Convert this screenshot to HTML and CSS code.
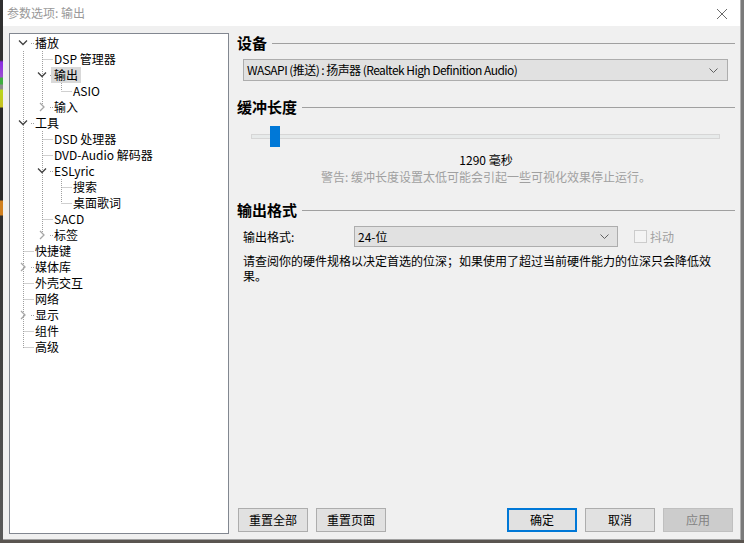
FILE: index.html
```html
<!DOCTYPE html>
<html lang="zh-CN">
<head>
<meta charset="utf-8">
<title>参数选项: 输出</title>
<link rel="stylesheet" href="styles.css">
</head>
<body>
<div class="screen">
  <div class="strip-left"></div>
  <div class="window">
    <div class="titlebar">
      <span class="title">参数选项: 输出</span>
      <svg class="close" width="12" height="12" viewBox="0 0 12 12"><path d="M1 1L11 11M11 1L1 11" stroke="#6b6b6b" stroke-width="1" fill="none"/></svg>
    </div>
    <div class="body">
      <div class="tree">
        <svg class="tree-lines" width="218" height="330" viewBox="0 0 218 330">
          <g stroke="#a0a0a0" stroke-width="1" stroke-dasharray="1 1" fill="none">
            <path d="M13.5 17V314"/>
            <path d="M21 9.5H24M21 89.5H24M21 233.5H24M21 281.5H24"/>
            <path d="M13.5 217.5H24M13.5 249.5H24M13.5 265.5H24M13.5 297.5H24M13.5 313.5H24"/>
            <path d="M32.5 17V73"/>
            <path d="M32.5 25.5H43M40 41.5H43M40 73.5H43"/>
            <path d="M32.5 97V201"/>
            <path d="M32.5 105.5H43M32.5 121.5H43M32.5 185.5H43M40 137.5H43M40 201.5H43"/>
            <path d="M51.5 49V57"/>
            <path d="M51.5 57.5H62"/>
            <path d="M51.5 145V169"/>
            <path d="M51.5 153.5H62M51.5 169.5H62"/>
          </g>
        </svg>
        <div class="row l0"><span class="exp open"></span><span class="label">播放</span></div>
        <div class="row l1"><span class="exp"></span><span class="label">DSP 管理器</span></div>
        <div class="row l1"><span class="exp open"></span><span class="label selected">输出</span></div>
        <div class="row l2"><span class="exp"></span><span class="label">ASIO</span></div>
        <div class="row l1"><span class="exp closed"></span><span class="label">输入</span></div>
        <div class="row l0"><span class="exp open"></span><span class="label">工具</span></div>
        <div class="row l1"><span class="exp"></span><span class="label">DSD 处理器</span></div>
        <div class="row l1"><span class="exp"></span><span class="label">DVD-Audio 解码器</span></div>
        <div class="row l1"><span class="exp open"></span><span class="label">ESLyric</span></div>
        <div class="row l2"><span class="exp"></span><span class="label">搜索</span></div>
        <div class="row l2"><span class="exp"></span><span class="label">桌面歌词</span></div>
        <div class="row l1"><span class="exp"></span><span class="label">SACD</span></div>
        <div class="row l1"><span class="exp closed"></span><span class="label">标签</span></div>
        <div class="row l0"><span class="exp"></span><span class="label">快捷键</span></div>
        <div class="row l0"><span class="exp closed"></span><span class="label">媒体库</span></div>
        <div class="row l0"><span class="exp"></span><span class="label">外壳交互</span></div>
        <div class="row l0"><span class="exp"></span><span class="label">网络</span></div>
        <div class="row l0"><span class="exp closed"></span><span class="label">显示</span></div>
        <div class="row l0"><span class="exp"></span><span class="label">组件</span></div>
        <div class="row l0"><span class="exp"></span><span class="label">高级</span></div>
      </div>
      <div class="main">
        <div class="section-head h-device"><span>设备</span></div>
        <div class="combo device">
          <span class="combo-text narrow">WASAPI (推送) : 扬声器 (Realtek High Definition Audio)</span>
          <svg class="chev" width="9" height="5" viewBox="0 0 9 5"><path d="M0.5 0.5L4.5 4.5L8.5 0.5" stroke="#606060" fill="none"/></svg>
        </div>
        <div class="section-head h-buffer"><span>缓冲长度</span></div>
        <div class="slider">
          <div class="track"></div>
          <div class="thumb" style="left:19px"></div>
        </div>
        <div class="value">1290 毫秒</div>
        <div class="warning">警告: 缓冲长度设置太低可能会引起一些可视化效果停止运行。</div>
        <div class="section-head h-format"><span>输出格式</span></div>
        <div class="format-row">
          <span class="format-label">输出格式:</span>
          <div class="combo format">
            <span class="combo-text">24-位</span>
            <svg class="chev" width="9" height="5" viewBox="0 0 9 5"><path d="M0.5 0.5L4.5 4.5L8.5 0.5" stroke="#606060" fill="none"/></svg>
          </div>
          <span class="checkbox"></span>
          <span class="check-label">抖动</span>
        </div>
        <p class="note">请查阅你的硬件规格以决定首选的位深；如果使用了超过当前硬件能力的位深只会降低效果。</p>
        <div class="spacer"></div>
        <div class="buttons">
          <button class="btn">重置全部</button>
          <button class="btn">重置页面</button>
          <span class="btn-gap"></span>
          <button class="btn default">确定</button>
          <button class="btn">取消</button>
          <button class="btn disabled">应用</button>
        </div>
      </div>
    </div>
  </div>
  <div class="strip-right"></div>
</div>
<div class="strip-bottom"></div>
</body>
</html>
```
FILE: styles.css
```css
* { box-sizing: border-box; }
html, body { margin: 0; padding: 0; }
body {
  width: 744px;
  height: 543px;
  overflow: hidden;
  background: #4a4a4a;
  font-family: "Noto Sans CJK SC", sans-serif;
  font-size: 12px;
  color: #000;
}
.screen { display: flex; height: 540px; }
.strip-left {
  width: 3px;
  background: linear-gradient(to bottom, #303030 0, #303030 60px, #8a2be2 62px, #9b4fd0 77px, #3fae3f 78px, #3fae3f 84px, #8c8c8c 85px, #8c8c8c 89px, #b8d820 90px, #c8c020 107px, #2a2a2a 108px, #2a2a2a 200px, #d08020 201px, #d08020 215px, #303030 216px, #5a5a5a 540px);
}
.strip-right { width: 3px; background: #7a7a7a; }
.strip-bottom { height: 3px; background: #5a5550; }
.window {
  width: 738px;
  height: 540px;
  background: #f0f0f0;
  display: flex;
  flex-direction: column;
  border-right: 1px solid #b0b0b0;
  border-bottom: 1px solid #a0a0a0;
}
.titlebar {
  height: 26px;
  background: #fff;
  display: flex;
  align-items: center;
  padding: 0 12px 0 4px;
}
.title { color: #999; font-size: 12px; line-height: 16px; flex: 1; }
.close { display: block; margin-top: 1px; }
.body {
  flex: 1;
  display: flex;
  padding: 7px 5px 5px 6px;
  gap: 8px;
}
.tree {
  position: relative;
  width: 220px;
  background: #fff;
  border: 1px solid #828790;
  padding-top: 1px;
}
.tree-lines { position: absolute; left: 0; top: 0; }
.row {
  position: relative;
  height: 16px;
  display: flex;
  align-items: center;
  white-space: nowrap;
}
.row.l1 { padding-left: 19px; }
.row.l2 { padding-left: 38px; }
.exp {
  width: 22px;
  height: 16px;
  flex: none;
  background-repeat: no-repeat;
  background-position: 0 0;
}
.exp.open {
  background-image: url("data:image/svg+xml,%3Csvg xmlns='http://www.w3.org/2000/svg' width='22' height='16'%3E%3Cpath d='M9 5.5L13 9.5L17 5.5' stroke='%23404040' stroke-width='1.3' fill='none'/%3E%3C/svg%3E");
}
.exp.closed {
  background-image: url("data:image/svg+xml,%3Csvg xmlns='http://www.w3.org/2000/svg' width='22' height='16'%3E%3Cpath d='M11 4L15 8L11 12' stroke='%23a6a6a6' stroke-width='1.3' fill='none'/%3E%3C/svg%3E");
}
.label {
  position: relative;
  padding: 0 3px;
  line-height: 16px;
  height: 16px;
  font-size: 12px;
}
.label.selected { background: #d9d9d9; }
.main {
  flex: 1;
  display: flex;
  flex-direction: column;
}
.section-head {
  display: flex;
  align-items: center;
  height: 20px;
  font-size: 15px;
  font-weight: bold;
  line-height: 20px;
}
.section-head span { position: relative; top: -1px; }
.section-head::after {
  content: "";
  flex: 1;
  margin-left: 5px;
  border-top: 1px solid #a0a0a0;
  margin-top: -1px;
}
.h-device { margin-top: 1px; }
.h-buffer { margin-top: 17px; }
.h-format { margin-top: 15px; }
.combo {
  height: 22px;
  display: flex;
  align-items: center;
  background: #e1e1e1;
  border: 1px solid #adadad;
  padding: 0 9px 0 3px;
}
.combo-text { flex: 1; line-height: 16px; white-space: nowrap; }
.combo-text.narrow { letter-spacing: -0.55px; }
.chev { display: block; flex: none; }
.combo.device { margin: 5px 7px 0 6px; }
.slider {
  position: relative;
  height: 21px;
  margin: 8px 15px 0 14px;
}
.track {
  margin-top: 8px;
  height: 5px;
  background: #e7eaea;
  border: 1px solid #d6d6d6;
}
.thumb {
  position: absolute;
  top: 0;
  width: 10px;
  height: 21px;
  background: #0078d7;
}
.value { margin-top: 4px; text-align: center; line-height: 18px; }
.warning { text-align: center; line-height: 18px; color: #a0a0a0; margin-top: -1px; }
.format-row {
  display: flex;
  align-items: center;
  margin: 5px 0 0 6px;
  height: 21px;
}
.format-label { width: 111px; line-height: 16px; }
.combo.format { width: 264px; height: 21px; padding-right: 8px; }
.checkbox {
  width: 13px;
  height: 13px;
  margin-left: 16px;
  border: 1px solid #cccccc;
  background: #f4f4f4;
}
.check-label { margin-left: 3px; color: #a0a0a0; line-height: 16px; }
.note {
  margin: 6px 0 0 6px;
  width: 476px;
  line-height: 15px;
  font-size: 12px;
}
.spacer { flex: 1; }
.buttons {
  display: flex;
  gap: 8px;
  padding: 0 2px 2px 1px;
}
.btn-gap { flex: 1; }
.btn {
  width: 70px;
  height: 24px;
  margin: 0;
  padding: 0;
  background: #e1e1e1;
  border: 1px solid #adadad;
  font-family: "Noto Sans CJK SC", sans-serif;
  font-size: 12px;
  color: #000;
  line-height: 16px;
}
.btn.default { border: 2px solid #0078d7; }
.btn.disabled { background: #cccccc; border-color: #bfbfbf; color: #838383; }
```
